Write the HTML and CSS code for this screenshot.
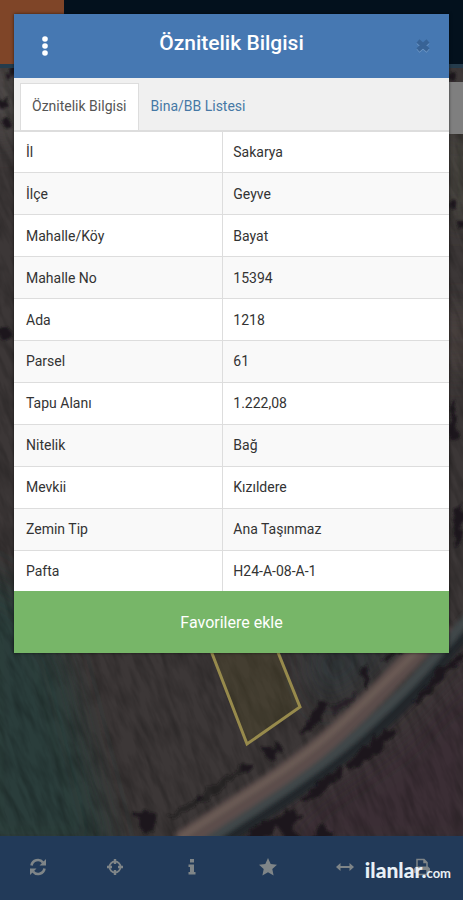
FILE: index.html
```html
<!DOCTYPE html>
<html lang="tr">
<head>
  <meta charset="UTF-8">
  <meta name="viewport" content="width=device-width, initial-scale=1.0">
  <title>Öznitelik Bilgisi</title>
  <link rel="stylesheet" href="styles.css">
</head>
<body>

  <header class="topbar">
    <div class="topbar-brand"></div>
  </header>

  <main class="map">
    <svg class="map-canvas" viewBox="0 68 463 768" preserveAspectRatio="xMidYMax slice" aria-hidden="true">
      <defs>
        <filter id="soft" x="-20%" y="-20%" width="140%" height="140%">
          <feGaussianBlur stdDeviation="16"/>
        </filter>
        <filter id="edge" x="-10%" y="-10%" width="120%" height="120%">
          <feTurbulence type="fractalNoise" baseFrequency="0.09" numOctaves="3" seed="4"/>
          <feDisplacementMap in="SourceGraphic" scale="12" xChannelSelector="R" yChannelSelector="G"/>
          <feGaussianBlur stdDeviation="1"/>
        </filter>
        <filter id="road" x="-10%" y="-10%" width="120%" height="120%">
          <feGaussianBlur stdDeviation="2"/>
        </filter>
        <filter id="grain" x="0" y="0" width="100%" height="100%">
          <feTurbulence type="fractalNoise" baseFrequency="0.14 0.03" numOctaves="4" seed="8"/>
          <feColorMatrix values="0 0 0 0 0  0 0 0 0 0  0 0 0 0 0  1.2 0 0 0 -0.45"/>
        </filter>
      </defs>

      <!-- fields -->
      <rect y="68" width="463" height="768" fill="#3c3737"/>
      <g filter="url(#soft)">
        <path d="M-30 560L30 600L65 660L90 760L115 860H-30z" fill="#293c3b"/>
        <path d="M300 640H410L320 710z" fill="#30393a"/>
        <path d="M490 650L400 740L310 800L250 860H490z" fill="#3a2e34"/>
        <path d="M-20 60H20V140H-20z" fill="#504c4a"/>
        <path d="M440 310H480V370H440z" fill="#4c4340"/>
        <path d="M445 130H480V220H445z" fill="#48463f"/>
      </g>
      <g transform="rotate(-22 231 450)">
        <rect x="-250" y="-80" width="960" height="1100" filter="url(#grain)" opacity=".4"/>
      </g>

      <!-- road and ditch -->
      <g fill="none" filter="url(#road)">
        <path d="M215 846C280 806 330 770 372 734S432 674 475 622" stroke="#20262b" stroke-width="12"/>
        <path d="M205 842C270 800 320 768 362 730S425 670 470 615" stroke="#3f4648" stroke-width="10"/>
        <path d="M180 842C240 802 285 776 323 744S385 686 445 622" stroke="#5c4e4b" stroke-width="20"/>
        <path d="M180 838C240 798 285 772 323 740S385 682 440 628" stroke="#6b5b55" stroke-width="6"/>
      </g>

      <!-- bushes -->
      <g fill="#1b191c" filter="url(#edge)">
        <path d="M133 812l12-2 12 7-4 14-8 4z"/>
        <path d="M168 816l34-22 44-32 6 3-42 34-38 20z" opacity=".5"/>
        <path d="M196 794l6 2-2 8-5-2zM242 764l12-3-4 8-8 3z"/>
        <path d="M262 747l8 2 6-6 3 7-8 10-6-3zM274 742l4-1 6 10-4 2z"/>
        <path d="M298 732l14-16 8-15 8 4-6 16-16 12z"/>
        <path d="M330 708l26-15 3 3-26 17z" opacity=".6"/>
        <path d="M362 680l4-16 4 10-4 16zM384 658l20-15 3 3-20 16z"/>
        <path d="M240 842l26-22 22-10 14 4-10 14 8 12-10 2-12-14-18 16z"/>
        <path d="M300 798l20-16 20-15 3 4-20 18-16 12z"/>
        <path d="M346 764l20-16 6-12 6 6 10-14 8 3-18 22-26 16z"/>
        <path d="M312 832l10-8 12 8-6 8h-14z"/>
        <path d="M412 700l24-26 27-22v8l-26 24-20 20z"/>
        <circle cx="3" cy="103" r="5"/>
        <circle cx="7" cy="124" r="4"/>
        <circle cx="12" cy="72" r="5"/>
        <circle cx="5" cy="333" r="7"/>
        <circle cx="453" cy="205" r="5"/>
        <circle cx="460" cy="224" r="4"/>
        <circle cx="452" cy="76" r="4"/>
        <path d="M449 400h5l5 40h-8zM452 510l11-8v36l-8 10z"/>
      </g>

      <!-- selected parcel -->
      <path d="M203 630L247 744L300 707L269 630z" fill="#5c5420" fill-opacity=".25" stroke="#978a4c" stroke-width="3"/>
    </svg>
    <div class="map-control"></div>
  </main>

  <nav class="toolbar" aria-label="Harita araçları">
    <button type="button" aria-label="Yenile">
      <svg width="18" height="18" viewBox="0 0 18 18" fill="none" stroke="currentColor" stroke-width="2.600">
        <path d="M2.500 7.500A6.500 6.500 0 0 1 14 4.500M15.500 10.500A6.500 6.500 0 0 1 4 13.500"/>
        <path d="M17 1v6.500h-6.500zM1 17v-6.500h6.500z" fill="currentColor" stroke="none"/>
      </svg>
    </button>
    <button type="button" aria-label="Konum">
      <svg width="18" height="18" viewBox="0 0 18 18" fill="none" stroke="currentColor">
        <circle cx="9" cy="9" r="5.500" stroke-width="1.800"/>
        <path d="M9 1v5M9 12v5M1 9h5M12 9h5" stroke-width="2.400"/>
      </svg>
    </button>
    <button type="button" aria-label="Bilgi">
      <svg width="18" height="18" viewBox="0 0 18 18" fill="currentColor">
        <path d="M7 1h4v3.500H7zM5.500 6.500H11V14h1.500v2.500h-7V14H7V9H5.500z"/>
      </svg>
    </button>
    <button type="button" aria-label="Favoriler">
      <svg width="18" height="18" viewBox="0 0 18 18" fill="currentColor">
        <path d="M9 0l2.700 5.900 6.300.8-4.700 4.300 1.300 6.400L9 14.200l-5.600 3.200L4.700 11 0 6.700l6.300-.8z"/>
      </svg>
    </button>
    <button type="button" aria-label="Ölç">
      <svg width="18" height="18" viewBox="0 0 18 18" fill="currentColor">
        <path d="M0 9l4.500-4v2.900h9V5L18 9l-4.500 4v-2.900h-9V13z"/>
      </svg>
    </button>
    <button type="button" aria-label="Yazdır">
      <svg width="18" height="18" viewBox="0 0 18 18" fill="none" stroke="currentColor" stroke-width="1.500">
        <path d="M4 9V1.500h7l3 3V9M11 1.500v3h3"/>
        <path d="M1 15V10.500L3 8.500h12l2 2V15h-3v-3H4v3z" fill="currentColor" stroke="none"/>
        <path d="M4 12v4.500h10V12"/>
      </svg>
    </button>
    <div class="watermark">ilanlar.<span>com</span></div>
  </nav>

  <section class="modal" role="dialog" aria-labelledby="modal-title">
    <div class="modal-header">
      <button type="button" class="menu-btn" aria-label="Menü">
        <svg width="6" height="20" viewBox="0 0 6 20" fill="currentColor">
          <circle cx="3" cy="3" r="2.800"/>
          <circle cx="3" cy="10" r="2.800"/>
          <circle cx="3" cy="17" r="2.800"/>
        </svg>
      </button>
      <h1 id="modal-title">Öznitelik Bilgisi</h1>
      <button type="button" class="close-btn" aria-label="Kapat">
        <svg width="16" height="16" viewBox="0 0 16 16" fill="none" stroke-width="4.500">
          <path d="M3 4l10 9M13 4L3 13" stroke="#6f98c6"/>
          <path d="M3 3l10 9M13 3L3 12" stroke="#386396"/>
        </svg>
      </button>
    </div>

    <div class="tabs">
      <a href="#oznitelik" class="tab active">Öznitelik Bilgisi</a>
      <a href="#bina" class="tab">Bina/BB Listesi</a>
    </div>

    <table class="info-table" id="oznitelik">
      <tbody>
        <tr><th scope="row">İl</th><td>Sakarya</td></tr>
        <tr><th scope="row">İlçe</th><td>Geyve</td></tr>
        <tr><th scope="row">Mahalle/Köy</th><td>Bayat</td></tr>
        <tr><th scope="row">Mahalle No</th><td>15394</td></tr>
        <tr><th scope="row">Ada</th><td>1218</td></tr>
        <tr><th scope="row">Parsel</th><td>61</td></tr>
        <tr><th scope="row">Tapu Alanı</th><td>1.222,08</td></tr>
        <tr><th scope="row">Nitelik</th><td>Bağ</td></tr>
        <tr><th scope="row">Mevkii</th><td>Kızıldere</td></tr>
        <tr><th scope="row">Zemin Tip</th><td>Ana Taşınmaz</td></tr>
        <tr><th scope="row">Pafta</th><td>H24-A-08-A-1</td></tr>
      </tbody>
    </table>

    <button type="button" class="favorite-btn">Favorilere ekle</button>
  </section>

</body>
</html>
```
FILE: styles.css
```css
* {
  box-sizing: border-box;
}

body {
  margin: 0;
  min-height: 100vh;
  display: flex;
  flex-direction: column;
  font-family: Roboto, "Liberation Sans", sans-serif;
  font-size: 14px;
  line-height: 20px;
  color: #333;
  background-color: #223a59;
}

button {
  padding: 0;
  border: 0;
  background: none;
  font-family: inherit;
  cursor: pointer;
}

svg {
  display: block;
}

.topbar {
  height: 68px;
  background-color: #03111d;
  border-bottom: 4px solid #253c4c;
}

.topbar-brand {
  width: 64px;
  height: 64px;
  background-color: #7f4528;
}

/* Map */
.map {
  flex: 1;
  position: relative;
  overflow: hidden;
  background-color: #3a3635;
}

.map-canvas {
  position: absolute;
  width: 100%;
  height: 100%;
}

.map-control {
  position: absolute;
  top: 14px;
  right: 0;
  width: 40px;
  height: 52px;
  background-color: #7f7f7f;
}

/* Bottom toolbar */
.toolbar {
  position: relative;
  display: grid;
  grid-template-columns: repeat(6, 1fr);
  height: 64px;
  padding: 0 3px 2px 0;
  background-color: #223a59;
}

.toolbar button {
  display: flex;
  justify-content: center;
  align-items: center;
  color: #7f8588;
}

.watermark {
  position: absolute;
  right: 12px;
  bottom: 15px;
  font-family: Lato, sans-serif;
  font-size: 21px;
  font-weight: 900;
  line-height: 24px;
  color: #e9f0f6;
}

.watermark span {
  font-size: 13px;
  font-weight: 700;
}

/* Modal */
.modal {
  position: absolute;
  top: 14px;
  left: 14px;
  right: 14px;
  background-color: #fff;
  box-shadow: 0 0 3px rgba(0, 0, 0, 0.6);
}

.modal-header {
  display: flex;
  justify-content: space-between;
  align-items: center;
  height: 64px;
  padding: 0 18px 0 28px;
  color: #fff;
  background-color: #4678b2;
}

.modal-header h1 {
  margin: 0;
  padding-bottom: 6px;
  font-size: 21px;
  font-weight: 500;
  line-height: 28px;
}

.menu-btn {
  color: #fff;
}

.tabs {
  display: flex;
  height: 54px;
  padding: 5px 6px 0;
  background-color: #f0f0f0;
  border-bottom: 2px solid #ddd;
}

.tab {
  padding: 12px 11px;
  border: 1px solid transparent;
  border-bottom: 0;
  color: #4678a5;
  text-decoration: none;
}

.tab.active {
  color: #555;
  background-color: #fff;
  border-color: #ddd;
}

.info-table {
  width: 100%;
  height: 459px;
  table-layout: fixed;
  border-collapse: collapse;
}

.info-table th,
.info-table td {
  padding: 0 10px;
  border-top: 1px solid #ddd;
  font-weight: 400;
  text-align: left;
}

.info-table tr:first-child th,
.info-table tr:first-child td {
  border-top: 0;
}

.info-table th {
  width: 48%;
  padding-left: 12px;
  border-right: 1px solid #ddd;
}

.info-table tr:nth-child(even) {
  background-color: #f9f9f9;
}

.favorite-btn {
  display: block;
  width: 100%;
  height: 62px;
  color: #fff;
  font-size: 16px;
  background-color: #77b668;
}
```
